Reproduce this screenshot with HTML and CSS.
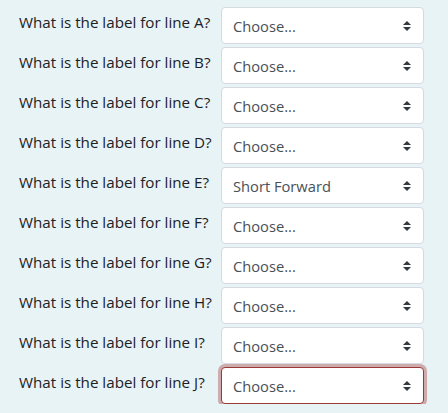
FILE: index.html
```html
<!DOCTYPE html>
<html lang="en">
<head>
<meta charset="utf-8">
<title>Line labels</title>
<link rel="stylesheet" href="styles.css">
</head>
<body>
<div class="form">
  <div class="row"><label class="q">What is the label for line A?</label><div class="sel"><select><option>Choose...</option></select><svg class="arrow" viewBox="0 0 8 10"><path d="M4 0L8 4H0z M0 6H8L4 10z"/></svg></div></div>
  <div class="row"><label class="q">What is the label for line B?</label><div class="sel"><select><option>Choose...</option></select><svg class="arrow" viewBox="0 0 8 10"><path d="M4 0L8 4H0z M0 6H8L4 10z"/></svg></div></div>
  <div class="row"><label class="q">What is the label for line C?</label><div class="sel"><select><option>Choose...</option></select><svg class="arrow" viewBox="0 0 8 10"><path d="M4 0L8 4H0z M0 6H8L4 10z"/></svg></div></div>
  <div class="row"><label class="q">What is the label for line D?</label><div class="sel"><select><option>Choose...</option></select><svg class="arrow" viewBox="0 0 8 10"><path d="M4 0L8 4H0z M0 6H8L4 10z"/></svg></div></div>
  <div class="row"><label class="q">What is the label for line E?</label><div class="sel"><select><option>Short Forward</option></select><svg class="arrow" viewBox="0 0 8 10"><path d="M4 0L8 4H0z M0 6H8L4 10z"/></svg></div></div>
  <div class="row"><label class="q">What is the label for line F?</label><div class="sel"><select><option>Choose...</option></select><svg class="arrow" viewBox="0 0 8 10"><path d="M4 0L8 4H0z M0 6H8L4 10z"/></svg></div></div>
  <div class="row"><label class="q">What is the label for line G?</label><div class="sel"><select><option>Choose...</option></select><svg class="arrow" viewBox="0 0 8 10"><path d="M4 0L8 4H0z M0 6H8L4 10z"/></svg></div></div>
  <div class="row"><label class="q">What is the label for line H?</label><div class="sel"><select><option>Choose...</option></select><svg class="arrow" viewBox="0 0 8 10"><path d="M4 0L8 4H0z M0 6H8L4 10z"/></svg></div></div>
  <div class="row"><label class="q">What is the label for line I?</label><div class="sel"><select><option>Choose...</option></select><svg class="arrow" viewBox="0 0 8 10"><path d="M4 0L8 4H0z M0 6H8L4 10z"/></svg></div></div>
  <div class="row"><label class="q">What is the label for line J?</label><div class="sel"><select class="invalid"><option>Choose...</option></select><svg class="arrow" viewBox="0 0 8 10"><path d="M4 0L8 4H0z M0 6H8L4 10z"/></svg></div></div>
</div>
</body>
</html>
```
FILE: styles.css
```css
html, body {
  margin: 0;
  background: #e7f3f5;
}
body {
  font-family: "Open Sans", "Liberation Sans", sans-serif;
  font-size: 15.2px;
  color: #1d2125;
}
.form {
  padding: 7px 0 0 19px;
  display: flex;
  flex-direction: column;
  gap: 3px;
}
.row {
  display: flex;
  align-items: flex-start;
}
.q {
  width: 202px;
  line-height: 20px;
  padding-top: 5px;
}
.sel {
  position: relative;
  width: 203px;
  height: 37px;
}
.sel select {
  appearance: none;
  -webkit-appearance: none;
  width: 100%;
  height: 37px;
  box-sizing: border-box;
  margin: 0;
  padding: 1px 30px 0 11px;
  border: 1px solid #d4dadf;
  border-radius: 4px;
  background: #fff;
  font: inherit;
  font-size: 14.7px;
  color: #495057;
}
.sel select.invalid {
  border-color: #9a3a38;
  box-shadow: 0 0 0 3px rgba(175, 85, 85, 0.45);
}
.arrow {
  position: absolute;
  right: 13px;
  top: 14px;
  width: 8px;
  height: 10px;
  fill: #343a40;
}
```
